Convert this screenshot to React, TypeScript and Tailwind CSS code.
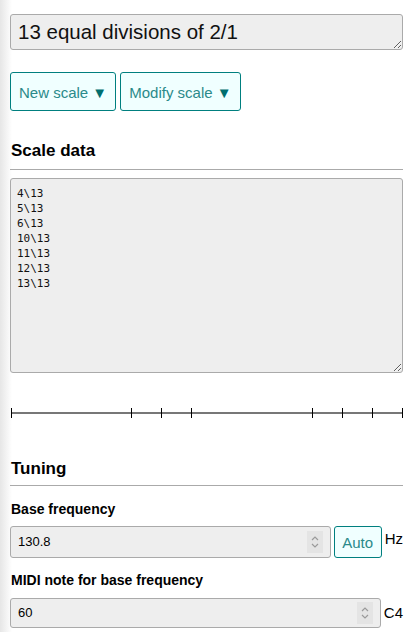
import React from "react";

const ticks = [0, 4, 5, 6, 10, 11, 12, 13];

function Spinner() {
  return (
    <div className="w-[16px] h-[22px] bg-[#e4e4e4] flex items-center justify-center">
      <svg width="10" height="16" viewBox="0 0 10 16" fill="none" stroke="#9a9a9a" strokeWidth="1.2">
        <path d="M2 6l3-3 3 3" />
        <path d="M2 10l3 3 3-3" />
      </svg>
    </div>
  );
}

export default function App() {
  return (
    <div
      className="w-[413px] h-[632px] overflow-hidden bg-[linear-gradient(to_right,#e6e6e6,#ffffff_12px)] px-[10px] text-black"
      style={{ fontFamily: '"Liberation Sans", Arial, sans-serif' }}
    >
      <textarea
        readOnly
        value="13 equal divisions of 2/1"
        className="block mt-[14px] w-full h-[36px] bg-[#eeeeee] border border-[#aaaaaa] rounded-[3px] px-[7px] pt-[5px] text-[20.5px] leading-[23px] text-[#111] outline-none"
      />

      <div className="flex gap-[4px] mt-[22px]">
        <button className="h-[39px] px-[8px] pt-[3px] border border-[#007f7f] rounded-[3px] bg-[#f0ffff] text-[#2a8a8a] text-[15px]">
          New scale <span className="text-[#006f6f]">▼</span>
        </button>
        <button className="h-[39px] px-[8px] pt-[3px] border border-[#007f7f] rounded-[3px] bg-[#f0ffff] text-[#2a8a8a] text-[15px]">
          Modify scale <span className="text-[#006f6f]">▼</span>
        </button>
      </div>

      <h2 className="mt-[30px] text-[17px] font-bold leading-[20px] pl-[1px]">Scale data</h2>
      <div className="mt-[8px] border-t border-[#aaaaaa]" />

      <textarea
        readOnly
        value={"4\\13\n5\\13\n6\\13\n10\\13\n11\\13\n12\\13\n13\\13"}
        className="block mt-[8px] w-full h-[195px] bg-[#eeeeee] border border-[#aaaaaa] rounded-[3px] px-[6px] pt-[7px] text-[11px] leading-[15px] text-[#111] outline-none"
        style={{ fontFamily: '"DejaVu Sans Mono", "Liberation Mono", monospace' }}
      />

      <div className="relative mt-[35px] h-[10px]">
        <div className="absolute left-[1px] right-[1px] top-[4px] h-[2px] bg-[#777777]" />
        {ticks.map((t) => (
          <div
            key={t}
            className="absolute top-0 w-[1px] h-[10px] bg-black"
            style={{ left: 1 + (t / 13) * 391 }}
          />
        ))}
      </div>

      <h2 className="mt-[41px] text-[17px] font-bold leading-[20px] pl-[1px]">Tuning</h2>
      <div className="mt-[6px] border-t border-[#aaaaaa]" />

      <div className="mt-[15px] text-[14px] font-bold leading-[16px] pl-[1px]">Base frequency</div>
      <div className="flex items-center mt-[9px] gap-[3px]">
        <div className="w-[321px] h-[32px] bg-[#eeeeee] border border-[#aaaaaa] rounded-[3px] flex items-center justify-between pl-[7px] pr-[7px] text-[13px]">
          <span>130.8</span>
          <Spinner />
        </div>
        <button className="w-[48px] h-[32px] pt-[2px] border border-[#007f7f] rounded-[3px] bg-[#f0ffff] text-[#2a8a8a] text-[15px]">
          Auto
        </button>
        <span className="text-[15px] -mt-[6px]">Hz</span>
      </div>

      <div className="mt-[14px] text-[14px] font-bold leading-[16px] pl-[1px]">MIDI note for base frequency</div>
      <div className="flex items-center mt-[10px] gap-[3px]">
        <div className="w-[371px] h-[30px] bg-[#eeeeee] border border-[#aaaaaa] rounded-[3px] flex items-center justify-between pl-[7px] pr-[7px] text-[13px]">
          <span>60</span>
          <Spinner />
        </div>
        <span className="text-[15px]">C4</span>
      </div>
    </div>
  );
}
